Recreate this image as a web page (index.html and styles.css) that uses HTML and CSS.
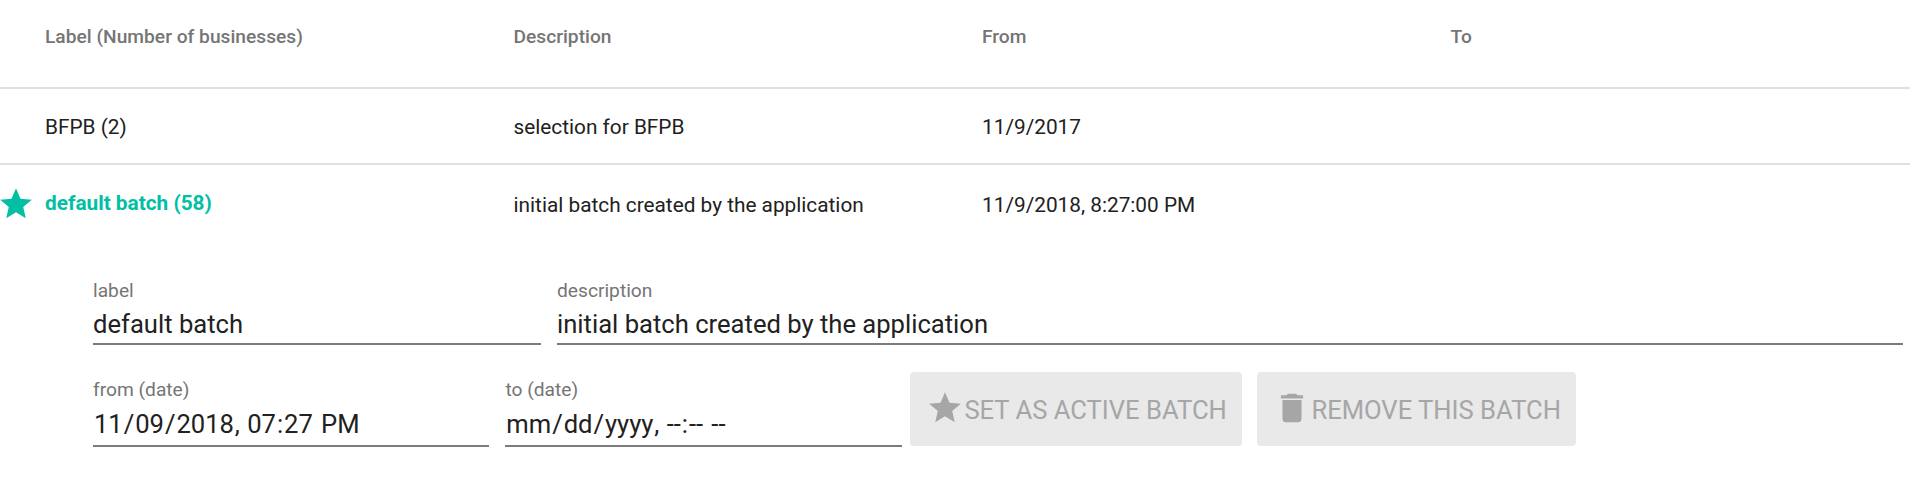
FILE: index.html
```html
<!DOCTYPE html>
<html lang="en"><head><meta charset="utf-8"><title>Batches</title><link rel="stylesheet" href="styles.css"></head>
<body>
<main class="batches">
<div class="row header"><span>Label (Number of businesses)</span><span>Description</span><span>From</span><span>To</span></div>
<div class="row item"><span>BFPB (2)</span><span>selection for BFPB</span><span>11/9/2017</span><span></span></div>
<div class="row item active"><svg class="marker" viewBox="0 0 24 24"><path d="M12 17.27 18.18 21l-1.64-7.03L22 9.24l-7.19-.61L12 2 9.19 8.63 2 9.24l5.46 4.73L5.82 21z"/></svg><span class="name">default batch (58)</span><span>initial batch created by the application</span><span>11/9/2018, 8:27:00 PM</span><span></span></div>
<form class="editor">
<div class="line first"><label class="field w-label"><span class="caption">label</span><span class="value">default batch</span></label><label class="field w-desc"><span class="caption">description</span><span class="value">initial batch created by the application</span></label></div>
<div class="line second"><label class="field w-date"><span class="caption">from (date)</span><span class="value date"><i>11</i>/<i>09</i>/<i>2018</i>, <i>07</i>:<i>27</i> <i>PM</i></span></label><label class="field w-date"><span class="caption">to (date)</span><span class="value date"><i>mm</i>/<i>dd</i>/<i>yyyy</i>, <i>--</i>:<i>--</i> <i>--</i></span></label>
<button class="btn set" type="button" disabled><svg viewBox="0 0 24 24"><path d="M12 17.27 18.18 21l-1.64-7.03L22 9.24l-7.19-.61L12 2 9.19 8.63 2 9.24l5.46 4.73L5.82 21z"/></svg><span>SET AS ACTIVE BATCH</span></button>
<button class="btn remove" type="button" disabled><svg viewBox="0 0 24 24"><path d="M6 19c0 1.1.9 2 2 2h8c1.1 0 2-.9 2-2V7H6v12zM19 4h-3.500l-1-1h-5l-1 1H5v2h14V4z"/></svg><span>REMOVE THIS BATCH</span></button></div>
</form>
</main>
</body></html>
```
FILE: styles.css
```css
*{box-sizing:border-box}
body{margin:0;background:#fff;color:#212121;font-family:Roboto,sans-serif;font-size:20.8px}
.row{display:grid;grid-template-columns:repeat(4,468.5px);padding-left:45px;position:relative;align-items:center}
.header{height:89px;padding-bottom:14px;font-size:19.2px;font-weight:500;color:#757575;border-bottom:2px solid #e0e0e0}
.item{height:76px;padding-top:2px;border-bottom:2px solid #e0e0e0}
.active{border-bottom:0;padding-top:4px}
.name{color:#00bfa5;font-weight:700;position:relative;top:-2px}
.marker{position:absolute;left:-3px;top:20px;width:38px;height:38px;fill:#00bfa5}
.editor{padding:37px 7px 0 93px}
.line{display:flex;align-items:flex-start}
.field{display:flex;flex-direction:column;border-bottom:2px solid #7b7b7b;margin-right:16px;white-space:nowrap}
.caption{font-size:19.2px;line-height:24px;padding-top:1px;margin-bottom:-1px;color:#757575}
.value{font-size:25.6px;line-height:44px}
.date{margin-top:1px}
.date i{font-style:normal;padding:0 .95px}
.first .field{height:67px}
.second{margin-top:27px}
.second .field{height:70px;margin-top:5px}
.w-label{width:448px}
.first .w-desc{flex:1;margin-right:0}
.w-date{width:396.4px}
.btn{height:74px;border:0;border-radius:4px;background:#e9e9e9;color:#a6a6a6;font:400 25.6px Roboto,sans-serif;display:flex;align-items:center;padding:0 16px;margin-right:15px;white-space:nowrap}
.btn svg{width:38px;height:38px;margin-top:-2px;fill:#a6a6a6;flex:none}
.btn span{padding-top:1px;margin-left:.6px}
.set{width:332px;margin-left:-8px}
.remove{width:319px}
```
